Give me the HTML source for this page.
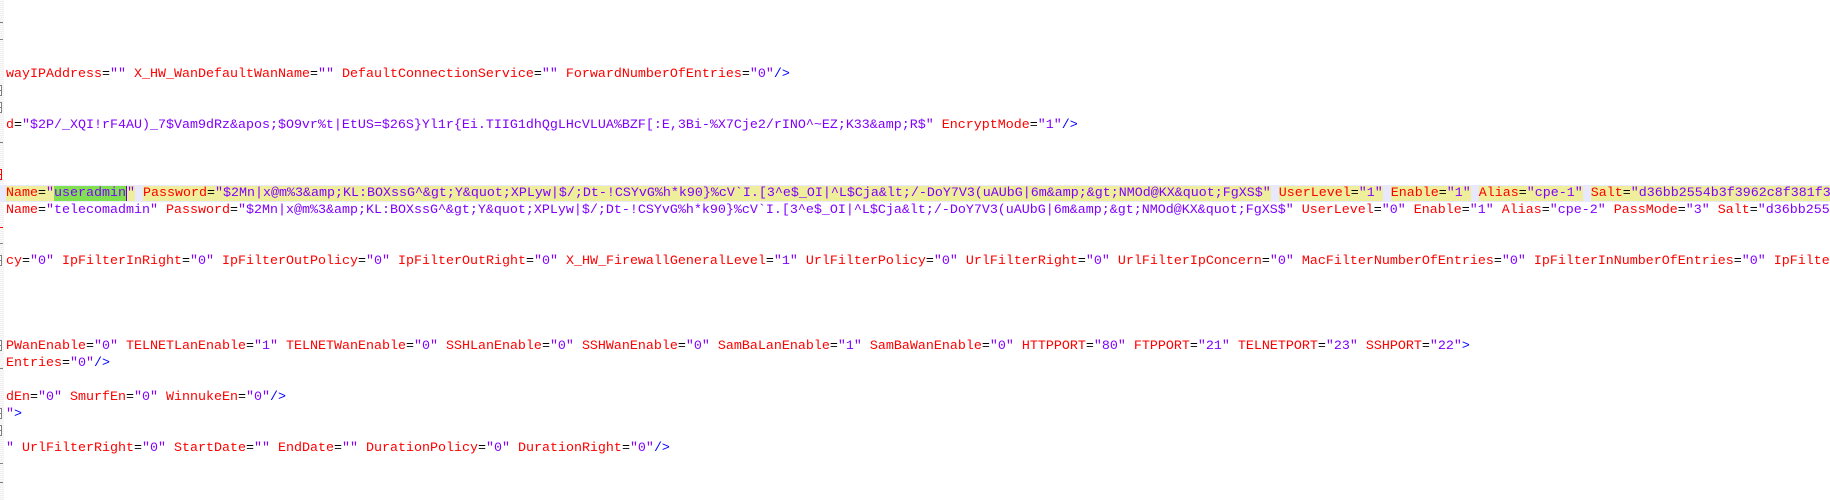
<!DOCTYPE html>
<html><head><meta charset="utf-8">
<style>
html,body{margin:0;padding:0;width:1830px;height:500px;overflow:hidden;background:#fff;}
#m{position:absolute;left:0;top:0;width:4px;height:500px;background:repeating-linear-gradient(0deg,#f0f0f0 0,#f0f0f0 1px,#fafafa 1px,#fafafa 2px);}
.mk{position:absolute;left:0;width:3px;height:1px;background:#808080;}
.bx{position:absolute;left:-6px;width:8px;height:11px;border:1px solid #808080;box-sizing:border-box;background:#fff;}
.bx::after{content:"";position:absolute;left:3px;top:4px;width:4px;height:1px;background:#808080;}
.red{border-color:#ff0000;}.red::after{background:#f00;}
#t{position:absolute;left:6px;top:-2px;right:0;font-family:"Liberation Mono","Courier New",monospace;font-size:13.33px;line-height:17px;color:#000;}
.l{height:17px;overflow:hidden;white-space:pre;}
.cur{background:#e8e8ff;margin-left:-6px;padding-left:6px;}
.a{color:#ff0000}.v{color:#8000ff}.t{color:#0000ff}
.y{background:#eeee9c}
.g{background:#80e050}
.c{border-right:1px solid #6000c0}
</style></head><body>
<div id="m"></div>
<div class="mk" style="top:22px"></div>
<div class="mk" style="top:39px"></div>
<div class="bx" style="top:85px"></div>
<div class="bx" style="top:102px"></div>
<div class="mk" style="top:142px"></div>
<div class="bx red" style="top:169px"></div>
<div class="mk" style="top:227px;background:#f00"></div>
<div class="mk" style="top:243px"></div>
<div class="bx" style="top:255px"></div>
<div class="bx" style="top:340px"></div>
<div class="mk" style="top:368px"></div>
<div class="bx" style="top:408px"></div>
<div class="bx" style="top:425px"></div>
<div class="mk" style="top:463px"></div>
<div class="mk" style="top:482px"></div>
<div id="t"><div class="l"></div><div class="l"></div><div class="l"></div><div class="l"></div><div class="l"><span class="a">wayIPAddress</span>=<span class="v">""</span> <span class="a">X_HW_WanDefaultWanName</span>=<span class="v">""</span> <span class="a">DefaultConnectionService</span>=<span class="v">""</span> <span class="a">ForwardNumberOfEntries</span>=<span class="v">"0"</span><span class="t">/&gt;</span></div><div class="l"></div><div class="l"></div><div class="l"><span class="a">d</span>=<span class="v">"$2P/_XQI!rF4AU)_7$Vam9dRz&amp;apos;$O9vr%t|EtUS=$26S}Yl1r{Ei.TIIG1dhQgLHcVLUA%BZF[:E,3Bi-%X7Cje2/rINO^~EZ;K33&amp;amp;R$"</span> <span class="a">EncryptMode</span>=<span class="v">"1"</span><span class="t">/&gt;</span></div><div class="l"></div><div class="l"></div><div class="l"></div><div class="l cur"><span class="y"><span class="a">Name</span>=<span class="v">"<span class="g c">useradmin</span>"</span></span> <span class="y"><span class="a">Password</span>=<span class="v">"$2Mn|x@m%3&amp;amp;KL:BOXssG^&amp;gt;Y&amp;quot;XPLyw|$/;Dt-!CSYvG%h*k90}%cV`I.[3^e$_OI|^L$Cja&amp;lt;/-DoY7V3(uAUbG|6m&amp;amp;&amp;gt;NMOd@KX&amp;quot;FgXS$"</span></span> <span class="y"><span class="a">UserLevel</span>=<span class="v">"1"</span></span> <span class="y"><span class="a">Enable</span>=<span class="v">"1"</span></span> <span class="y"><span class="a">Alias</span>=<span class="v">"cpe-1"</span></span> <span class="y"><span class="a">Salt</span>=<span class="v">"d36bb2554b3f3962c8f381f3a1b2c3d4"</span></span></div><div class="l"><span class="a">Name</span>=<span class="v">"telecomadmin"</span> <span class="a">Password</span>=<span class="v">"$2Mn|x@m%3&amp;amp;KL:BOXssG^&amp;gt;Y&amp;quot;XPLyw|$/;Dt-!CSYvG%h*k90}%cV`I.[3^e$_OI|^L$Cja&amp;lt;/-DoY7V3(uAUbG|6m&amp;amp;&amp;gt;NMOd@KX&amp;quot;FgXS$"</span> <span class="a">UserLevel</span>=<span class="v">"0"</span> <span class="a">Enable</span>=<span class="v">"1"</span> <span class="a">Alias</span>=<span class="v">"cpe-2"</span> <span class="a">PassMode</span>=<span class="v">"3"</span> <span class="a">Salt</span>=<span class="v">"d36bb2554b3f3962"</span></div><div class="l"></div><div class="l"></div><div class="l"><span class="a">cy</span>=<span class="v">"0"</span> <span class="a">IpFilterInRight</span>=<span class="v">"0"</span> <span class="a">IpFilterOutPolicy</span>=<span class="v">"0"</span> <span class="a">IpFilterOutRight</span>=<span class="v">"0"</span> <span class="a">X_HW_FirewallGeneralLevel</span>=<span class="v">"1"</span> <span class="a">UrlFilterPolicy</span>=<span class="v">"0"</span> <span class="a">UrlFilterRight</span>=<span class="v">"0"</span> <span class="a">UrlFilterIpConcern</span>=<span class="v">"0"</span> <span class="a">MacFilterNumberOfEntries</span>=<span class="v">"0"</span> <span class="a">IpFilterInNumberOfEntries</span>=<span class="v">"0"</span> <span class="a">IpFilterOutNumberOfEntries</span>=<span class="v">"0"</span></div><div class="l"></div><div class="l"></div><div class="l"></div><div class="l"></div><div class="l"><span class="a">PWanEnable</span>=<span class="v">"0"</span> <span class="a">TELNETLanEnable</span>=<span class="v">"1"</span> <span class="a">TELNETWanEnable</span>=<span class="v">"0"</span> <span class="a">SSHLanEnable</span>=<span class="v">"0"</span> <span class="a">SSHWanEnable</span>=<span class="v">"0"</span> <span class="a">SamBaLanEnable</span>=<span class="v">"1"</span> <span class="a">SamBaWanEnable</span>=<span class="v">"0"</span> <span class="a">HTTPPORT</span>=<span class="v">"80"</span> <span class="a">FTPPORT</span>=<span class="v">"21"</span> <span class="a">TELNETPORT</span>=<span class="v">"23"</span> <span class="a">SSHPORT</span>=<span class="v">"22"</span><span class="t">&gt;</span></div><div class="l"><span class="a">Entries</span>=<span class="v">"0"</span><span class="t">/&gt;</span></div><div class="l"></div><div class="l"><span class="a">dEn</span>=<span class="v">"0"</span> <span class="a">SmurfEn</span>=<span class="v">"0"</span> <span class="a">WinnukeEn</span>=<span class="v">"0"</span><span class="t">/&gt;</span></div><div class="l"><span class="v">"</span><span class="t">&gt;</span></div><div class="l"></div><div class="l"><span class="v">"</span> <span class="a">UrlFilterRight</span>=<span class="v">"0"</span> <span class="a">StartDate</span>=<span class="v">""</span> <span class="a">EndDate</span>=<span class="v">""</span> <span class="a">DurationPolicy</span>=<span class="v">"0"</span> <span class="a">DurationRight</span>=<span class="v">"0"</span><span class="t">/&gt;</span></div></div>
</body></html>
